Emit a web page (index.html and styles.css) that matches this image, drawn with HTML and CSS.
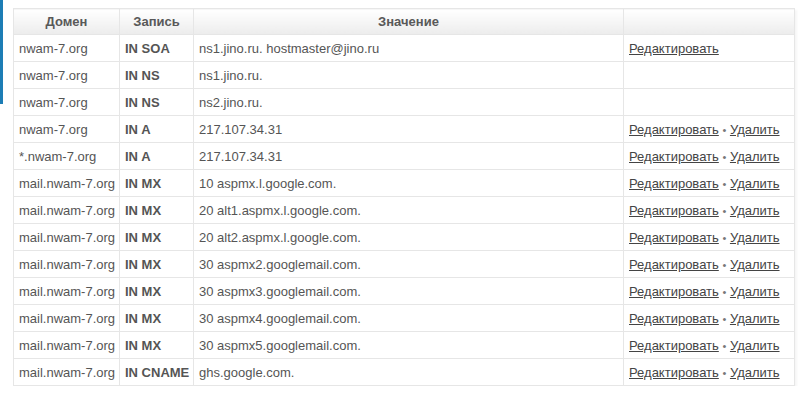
FILE: index.html
```html
<!DOCTYPE html>
<html>
<head>
<meta charset="utf-8">
<link rel="stylesheet" href="styles.css">
</head>
<body>
<div class="page">
  <div class="strip"></div>
  <div class="content">
    <table class="dns">
      <colgroup>
        <col class="c-domain"><col class="c-rec"><col class="c-val"><col class="c-act">
      </colgroup>
      <thead>
        <tr><th>Домен</th><th>Запись</th><th>Значение</th><th></th></tr>
      </thead>
      <tbody>
        <tr><td>nwam-7.org</td><td class="rec">IN SOA</td><td>ns1.jino.ru. hostmaster@jino.ru</td><td><a href="#">Редактировать</a></td></tr>
        <tr><td>nwam-7.org</td><td class="rec">IN NS</td><td>ns1.jino.ru.</td><td></td></tr>
        <tr><td>nwam-7.org</td><td class="rec">IN NS</td><td>ns2.jino.ru.</td><td></td></tr>
        <tr><td>nwam-7.org</td><td class="rec">IN A</td><td>217.107.34.31</td><td><a href="#">Редактировать</a> <span class="dot">•</span> <a href="#">Удалить</a></td></tr>
        <tr><td>*.nwam-7.org</td><td class="rec">IN A</td><td>217.107.34.31</td><td><a href="#">Редактировать</a> <span class="dot">•</span> <a href="#">Удалить</a></td></tr>
        <tr><td>mail.nwam-7.org</td><td class="rec">IN MX</td><td>10 aspmx.l.google.com.</td><td><a href="#">Редактировать</a> <span class="dot">•</span> <a href="#">Удалить</a></td></tr>
        <tr><td>mail.nwam-7.org</td><td class="rec">IN MX</td><td>20 alt1.aspmx.l.google.com.</td><td><a href="#">Редактировать</a> <span class="dot">•</span> <a href="#">Удалить</a></td></tr>
        <tr><td>mail.nwam-7.org</td><td class="rec">IN MX</td><td>20 alt2.aspmx.l.google.com.</td><td><a href="#">Редактировать</a> <span class="dot">•</span> <a href="#">Удалить</a></td></tr>
        <tr><td>mail.nwam-7.org</td><td class="rec">IN MX</td><td>30 aspmx2.googlemail.com.</td><td><a href="#">Редактировать</a> <span class="dot">•</span> <a href="#">Удалить</a></td></tr>
        <tr><td>mail.nwam-7.org</td><td class="rec">IN MX</td><td>30 aspmx3.googlemail.com.</td><td><a href="#">Редактировать</a> <span class="dot">•</span> <a href="#">Удалить</a></td></tr>
        <tr><td>mail.nwam-7.org</td><td class="rec">IN MX</td><td>30 aspmx4.googlemail.com.</td><td><a href="#">Редактировать</a> <span class="dot">•</span> <a href="#">Удалить</a></td></tr>
        <tr><td>mail.nwam-7.org</td><td class="rec">IN MX</td><td>30 aspmx5.googlemail.com.</td><td><a href="#">Редактировать</a> <span class="dot">•</span> <a href="#">Удалить</a></td></tr>
        <tr><td>mail.nwam-7.org</td><td class="rec">IN CNAME</td><td>ghs.google.com.</td><td><a href="#">Редактировать</a> <span class="dot">•</span> <a href="#">Удалить</a></td></tr>
      </tbody>
    </table>
  </div>
</div>
</body>
</html>
```

FILE: styles.css
```css
html, body {
  margin: 0;
  padding: 0;
  background: #fff;
}
body {
  font-family: "Liberation Sans", Arial, sans-serif;
  font-size: 13px;
  color: #555;
}
.page {
  display: flex;
  align-items: flex-start;
}
.strip {
  width: 3px;
  height: 104px;
  background: #1c7db5;
  flex: none;
}
.content {
  padding: 8px 0 0 10px;
}
.dns {
  border-collapse: collapse;
  table-layout: fixed;
  width: 781px;
  box-shadow: 2px 2px 2px rgba(0,0,0,0.04);
}
.c-domain { width: 106px; }
.c-rec { width: 74px; }
.c-val { width: 430px; }
.c-act { width: 171px; }
.dns th, .dns td {
  border: 1px solid #e6e6e6;
  padding: 0 5px;
  text-align: left;
  white-space: nowrap;
  overflow: hidden;
}
.dns th {
  height: 25px;
  font-weight: bold;
  text-align: center;
  color: #595959;
  background: linear-gradient(#ffffff, #ececec);
}
.dns td {
  height: 26px;
}
.dns td.rec {
  font-weight: bold;
  color: #555;
}
.dns a {
  color: #444;
  text-decoration: underline;
}
.dot {
  color: #777;
  font-size: 11px;
}
```
